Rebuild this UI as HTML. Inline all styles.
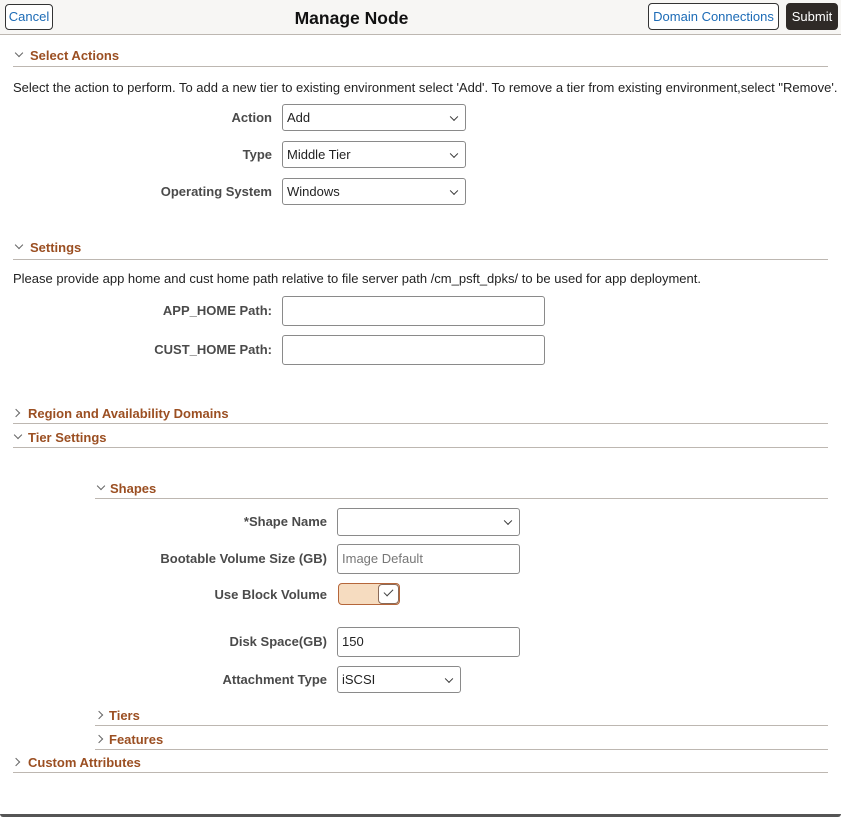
<!DOCTYPE html>
<html><head><meta charset="utf-8"><style>
*{box-sizing:border-box;margin:0;padding:0}
body{width:841px;height:817px;position:relative;background:#fff;font-family:"Liberation Sans",Arial,sans-serif;overflow:hidden;color:#222}
.a{position:absolute}
.hdr{left:0;top:0;width:841px;height:35px;background:#f7f6f4;border-bottom:1px solid #bdb7b1}
.btn{position:absolute;border:1px solid #333;border-radius:4px;background:#fff;color:#1c6bb6;font-size:13px;line-height:23px;text-align:center}
.sec{position:absolute;font-weight:bold;font-size:13px;color:#9b4f22;line-height:16px}
.line{position:absolute;height:1px;background:#bdb7b1}
.lab{position:absolute;font-weight:bold;font-size:13px;color:#4a4a4a;text-align:right;line-height:16px}
.txt{position:absolute;font-size:13px;color:#222;line-height:15px;white-space:nowrap}
.in{position:absolute;border:1px solid #8a8a8a;border-radius:3px;background:#fff;font-size:13px;padding-left:4px;line-height:25px;color:#222}
.sel:after{content:"";position:absolute;right:8px;top:50%;width:5px;height:5px;border-right:1.5px solid #333;border-bottom:1.5px solid #333;transform:translateY(-70%) rotate(45deg)}
.chd,.chr{position:absolute;width:6px;height:6px;border-right:1.3px solid #666;border-bottom:1.3px solid #666}
.chd{transform:rotate(45deg)}
.chr{transform:rotate(-45deg)}
</style></head><body>
<div class="a hdr"></div>
<div class="btn" style="left:5px;top:4px;width:48px;height:26px">Cancel</div>
<div class="a" style="left:0;width:703px;top:8px;text-align:center;font-weight:bold;font-size:17.5px;color:#111">Manage Node</div>
<div class="btn" style="left:648px;top:3px;width:131px;height:27px;line-height:25px">Domain Connections</div>
<div class="btn" style="left:786px;top:3px;width:52px;height:27px;line-height:25px;background:#2f2a27;color:#fff;border-color:#2f2a27">Submit</div>

<div class="chd" style="left:16px;top:50px"></div>
<div class="sec" style="left:30px;top:48px">Select Actions</div>
<div class="line" style="left:13px;top:66px;width:815px"></div>
<div class="txt" style="left:13px;top:80px">Select the action to perform. To add a new tier to existing environment select 'Add'. To remove a tier from existing environment,select "Remove'.</div>

<div class="lab" style="left:100px;width:172px;top:110px">Action</div>
<div class="in sel" style="left:282px;top:104px;width:184px;height:27px">Add</div>
<div class="lab" style="left:100px;width:172px;top:147px">Type</div>
<div class="in sel" style="left:282px;top:141px;width:184px;height:27px">Middle Tier</div>
<div class="lab" style="left:100px;width:172px;top:184px">Operating System</div>
<div class="in sel" style="left:282px;top:178px;width:184px;height:27px">Windows</div>

<div class="chd" style="left:16px;top:242px"></div>
<div class="sec" style="left:30px;top:240px">Settings</div>
<div class="line" style="left:13px;top:259px;width:815px"></div>
<div class="txt" style="left:13px;top:271px">Please provide app home and cust home path relative to file server path /cm_psft_dpks/ to be used for app deployment.</div>
<div class="lab" style="left:60px;width:212px;top:303px">APP_HOME Path:</div>
<div class="in" style="left:282px;top:296px;width:263px;height:30px"></div>
<div class="lab" style="left:60px;width:212px;top:342px">CUST_HOME Path:</div>
<div class="in" style="left:282px;top:335px;width:263px;height:30px"></div>

<div class="chr" style="left:13px;top:410px"></div>
<div class="sec" style="left:28px;top:406px">Region and Availability Domains</div>
<div class="line" style="left:13px;top:423px;width:815px"></div>
<div class="chd" style="left:15px;top:432px"></div>
<div class="sec" style="left:28px;top:430px">Tier Settings</div>
<div class="line" style="left:13px;top:447px;width:815px"></div>

<div class="chd" style="left:98px;top:483px"></div>
<div class="sec" style="left:110px;top:481px">Shapes</div>
<div class="line" style="left:95px;top:498px;width:733px"></div>

<div class="lab" style="left:120px;width:207px;top:514px">*Shape Name</div>
<div class="in sel" style="left:337px;top:508px;width:183px;height:28px"></div>
<div class="lab" style="left:120px;width:207px;top:551px">Bootable Volume Size (GB)</div>
<div class="in" style="left:337px;top:544px;width:183px;height:30px;line-height:28px;color:#777">Image Default</div>
<div class="lab" style="left:120px;width:207px;top:587px">Use Block Volume</div>
<div class="a" style="left:338px;top:583px;width:62px;height:22px;background:#f6dcc0;border:1px solid #b5663a;border-radius:4px"></div>
<div class="a" style="left:378px;top:584px;width:21px;height:20px;background:#fff;border:1px solid #8a6a58;border-radius:4px"></div>
<div class="a" style="left:386px;top:587px;width:5px;height:9px;border-right:1.5px solid #444;border-bottom:1.5px solid #444;transform:rotate(45deg)"></div>
<div class="lab" style="left:120px;width:207px;top:634px">Disk Space(GB)</div>
<div class="in" style="left:337px;top:627px;width:183px;height:30px;line-height:28px">150</div>
<div class="lab" style="left:120px;width:207px;top:672px">Attachment Type</div>
<div class="in sel" style="left:337px;top:666px;width:124px;height:27px">iSCSI</div>

<div class="chr" style="left:96px;top:712px"></div>
<div class="sec" style="left:109px;top:708px">Tiers</div>
<div class="line" style="left:95px;top:725px;width:733px"></div>
<div class="chr" style="left:96px;top:736px"></div>
<div class="sec" style="left:109px;top:732px">Features</div>
<div class="line" style="left:95px;top:749px;width:733px"></div>
<div class="chr" style="left:13px;top:759px"></div>
<div class="sec" style="left:28px;top:755px">Custom Attributes</div>
<div class="line" style="left:13px;top:772px;width:815px"></div>

<div class="a" style="left:0;top:814px;width:841px;height:3px;background:#555;border-radius:0 0 3px 3px"></div>
</body></html>
